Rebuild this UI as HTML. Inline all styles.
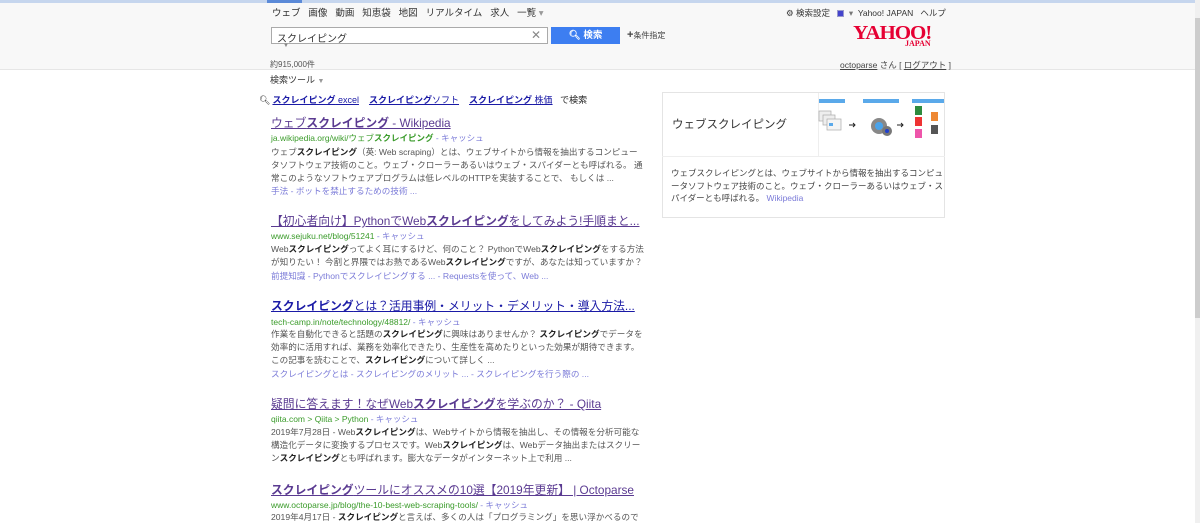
<!DOCTYPE html>
<html><head><meta charset="utf-8"><style>
*{margin:0;padding:0;box-sizing:border-box}
body{width:1200px;height:523px;overflow:hidden;background:#fff;font-family:"Liberation Sans","Noto Sans CJK JP",sans-serif;color:#333;position:relative}
.a{position:absolute;white-space:nowrap}
#top{position:absolute;left:0;top:0;width:1195px;height:70px;background:#f8f8f8;border-bottom:1px solid #e6e6e6}
#bar{position:absolute;left:0;top:0;width:1195px;height:3px;background:#c6d6ee}
#bar i{position:absolute;left:267px;top:0;width:35px;height:3px;background:#5b8ad8}
#sb{position:absolute;left:1195px;top:0;width:5px;height:523px;background:#f0f0f0}
#sb i{position:absolute;left:0;top:18px;width:5px;height:300px;background:#cdcdcd}
.nav{font-size:9.5px;color:#333}
.t{font-size:11.8px;color:#5a3a91;text-decoration:underline}
.t.b{color:#1a1aa6}
.t b{font-weight:bold}
.u{font-size:8.5px;color:#3a9b2a}
.u span{color:#7b7bd8}
.d{font-size:8.6px;color:#555;line-height:13px}
.d b{color:#222}
.l{font-size:8.6px;color:#7b7bd8}
</style></head><body>
<div id="top"></div><div id="bar"><i></i></div>
<div id="sb"><i></i></div>
<div class="a nav" style="left:272px;top:5px">ウェブ&nbsp;&nbsp;&nbsp;画像&nbsp;&nbsp;&nbsp;動画&nbsp;&nbsp;&nbsp;知恵袋&nbsp;&nbsp;&nbsp;地図&nbsp;&nbsp;&nbsp;リアルタイム&nbsp;&nbsp;&nbsp;求人&nbsp;&nbsp;&nbsp;一覧 <span style="color:#999">▾</span></div>
<div class="a" style="left:271px;top:27px;width:277px;height:17px;background:#fff;border:1px solid #aaa;font-size:10px;padding:2px 5px;color:#333">スクレイピング<span style="position:absolute;right:6px;top:0px;color:#888;font-size:12px">✕</span></div>
<div class="a" style="left:283px;top:43px;font-size:6px;color:#888">▼</div>
<div class="a" style="left:551px;top:27px;width:69px;height:17px;background:#3d7ef1;color:#fff;font-size:9.5px;font-weight:bold;text-align:center;line-height:17px">🔍︎ 検索</div>
<div class="a" style="left:627px;top:29px;font-size:8px;color:#444"><b style="font-size:11px">+</b>条件指定</div>
<div class="a" style="left:270px;top:59px;font-size:8px;color:#555">約915,000件</div>
<div class="a" style="left:270px;top:73px;font-size:9px;color:#333">検索ツール <span style="color:#999;font-size:7px">▼</span></div>
<div class="a nav" style="left:786px;top:7px;font-size:8.5px">⚙ 検索設定&nbsp;&nbsp;&nbsp;<span style="display:inline-block;width:7px;height:7px;border:1px solid #99c;background:#44c;vertical-align:-1px"></span>&nbsp;&nbsp;<span style="color:#777">▾</span>&nbsp;&nbsp;Yahoo! JAPAN&nbsp;&nbsp;&nbsp;ヘルプ</div>
<div class="a" style="left:855px;top:22px;font-family:'Liberation Serif',serif;font-weight:bold;color:#e60033;font-size:20px;letter-spacing:-1px;transform:scaleX(1.05)">YAHOO!</div>
<div class="a" style="left:905px;top:39px;font-family:'Liberation Serif',serif;font-weight:bold;color:#e60033;font-size:8px">JAPAN</div>
<div class="a" style="left:840px;top:59px;font-size:8.5px;color:#444"><span style="text-decoration:underline">octoparse</span> さん [ <span style="text-decoration:underline">ログアウト</span> ]</div>
<div class="a" style="left:259px;top:93px;font-size:9px;color:#222">🔍︎<span style="color:#1a1aa6;text-decoration:underline;margin-left:2px"><b>スクレイピング</b> excel</span>&nbsp;&nbsp;&nbsp;&nbsp;<span style="color:#1a1aa6;text-decoration:underline"><b>スクレイピング</b>ソフト</span>&nbsp;&nbsp;&nbsp;&nbsp;<span style="color:#1a1aa6;text-decoration:underline"><b>スクレイピング</b> 株価</span>&nbsp;&nbsp;&nbsp;で検索</div>

<div class="a t" style="left:271px;top:114px">ウェブ<b>スクレイピング</b> - Wikipedia</div>
<div class="a u" style="left:271px;top:132px">ja.wikipedia.org/wiki/ウェブ<b>スクレイピング</b> <span>- キャッシュ</span></div>
<div class="a d" style="left:271px;top:146px">ウェブ<b>スクレイピング</b>（英: Web scraping）とは、ウェブサイトから情報を抽出するコンピュー<br>タソフトウェア技術のこと。ウェブ・クローラーあるいはウェブ・スパイダーとも呼ばれる。 通<br>常このようなソフトウェアプログラムは低レベルのHTTPを実装することで、 もしくは ...</div>
<div class="a l" style="left:271px;top:185px">手法 - ボットを禁止するための技術 ...</div>

<div class="a t" style="left:271px;top:212px">【初心者向け】PythonでWeb<b>スクレイピング</b>をしてみよう!手順まと...</div>
<div class="a u" style="left:271px;top:230px">www.sejuku.net/blog/51241 <span>- キャッシュ</span></div>
<div class="a d" style="left:271px;top:243px">Web<b>スクレイピング</b>ってよく耳にするけど、何のこと？ PythonでWeb<b>スクレイピング</b>をする方法<br>が知りたい！ 今割と界隈ではお熱であるWeb<b>スクレイピング</b>ですが、あなたは知っていますか？</div>
<div class="a l" style="left:271px;top:270px">前提知識 - Pythonでスクレイピングする ... - Requestsを使って、Web ...</div>

<div class="a t b" style="left:271px;top:297px"><b>スクレイピング</b>とは？活用事例・メリット・デメリット・導入方法...</div>
<div class="a u" style="left:271px;top:316px">tech-camp.in/note/technology/48812/ <span>- キャッシュ</span></div>
<div class="a d" style="left:271px;top:328px">作業を自動化できると話題の<b>スクレイピング</b>に興味はありませんか？ <b>スクレイピング</b>でデータを<br>効率的に活用すれば、業務を効率化できたり、生産性を高めたりといった効果が期待できます。<br>この記事を読むことで、<b>スクレイピング</b>について詳しく ...</div>
<div class="a l" style="left:271px;top:368px">スクレイピングとは - スクレイピングのメリット ... - スクレイピングを行う際の ...</div>

<div class="a t" style="left:271px;top:395px">疑問に答えます！なぜWeb<b>スクレイピング</b>を学ぶのか？ - Qiita</div>
<div class="a u" style="left:271px;top:413px">qiita.com &gt; Qiita &gt; Python <span>- キャッシュ</span></div>
<div class="a d" style="left:271px;top:426px">2019年7月28日 - Web<b>スクレイピング</b>は、Webサイトから情報を抽出し、その情報を分析可能な<br>構造化データに変換するプロセスです。Web<b>スクレイピング</b>は、Webデータ抽出またはスクリー<br>ン<b>スクレイピング</b>とも呼ばれます。膨大なデータがインターネット上で利用 ...</div>

<div class="a t" style="left:271px;top:481px"><b>スクレイピング</b>ツールにオススメの10選【2019年更新】 | Octoparse</div>
<div class="a u" style="left:271px;top:499px">www.octoparse.jp/blog/the-10-best-web-scraping-tools/ <span>- キャッシュ</span></div>
<div class="a d" style="left:271px;top:511px">2019年4月17日 - <b>スクレイピング</b>と言えば、多くの人は「プログラミング」を思い浮かべるので</div>

<div class="a" style="left:662px;top:92px;width:283px;height:126px;border:1px solid #e4e4e4;background:#fff"></div>
<div class="a" style="left:662px;top:156px;width:283px;height:1px;background:#eee"></div>
<div class="a" style="left:818px;top:93px;width:1px;height:63px;background:#eee"></div>
<div class="a" style="left:672px;top:116px;font-size:11.5px;color:#333">ウェブスクレイピング</div>
<svg class="a" style="left:818px;top:98px" width="127" height="58" viewBox="0 0 127 58">
<rect x="1" y="1" width="26" height="4" fill="#5aa9ea"/><rect x="45" y="1" width="36" height="4" fill="#5aa9ea"/><rect x="94" y="1" width="32" height="4" fill="#5aa9ea"/>
<rect x="1" y="13" width="12" height="10" fill="#eee" stroke="#aaa" stroke-width=".7"/><rect x="5" y="17" width="12" height="10" fill="#eee" stroke="#aaa" stroke-width=".7"/><rect x="9" y="21" width="14" height="11" fill="#f4f4f4" stroke="#aaa" stroke-width=".7"/><rect x="11" y="25" width="4" height="3" fill="#5aa9ea"/>
<path d="M31 27h6m-2-2l2 2-2 2" stroke="#222" fill="none"/>
<circle cx="61" cy="28" r="8" fill="#888"/><circle cx="61" cy="28" r="4" fill="#4aa3ea"/><circle cx="69" cy="33" r="5" fill="#777"/><circle cx="69" cy="33" r="2" fill="#1f3fcf"/>
<path d="M79 27h6m-2-2l2 2-2 2" stroke="#222" fill="none"/>
<rect x="97" y="8" width="7" height="9" fill="#2e8b3e"/><rect x="97" y="19" width="7" height="9" fill="#e33"/><rect x="97" y="31" width="7" height="9" fill="#e5a"/><rect x="113" y="14" width="7" height="9" fill="#e83"/><rect x="113" y="27" width="7" height="9" fill="#555"/>
</svg>
<div class="a" style="left:671px;top:167px;font-size:8.5px;line-height:12.5px;color:#444">ウェブスクレイピングとは、ウェブサイトから情報を抽出するコンピュ<br>ータソフトウェア技術のこと。ウェブ・クローラーあるいはウェブ・ス<br>パイダーとも呼ばれる。 <span style="color:#7b7bd8">Wikipedia</span></div>
</body></html>
